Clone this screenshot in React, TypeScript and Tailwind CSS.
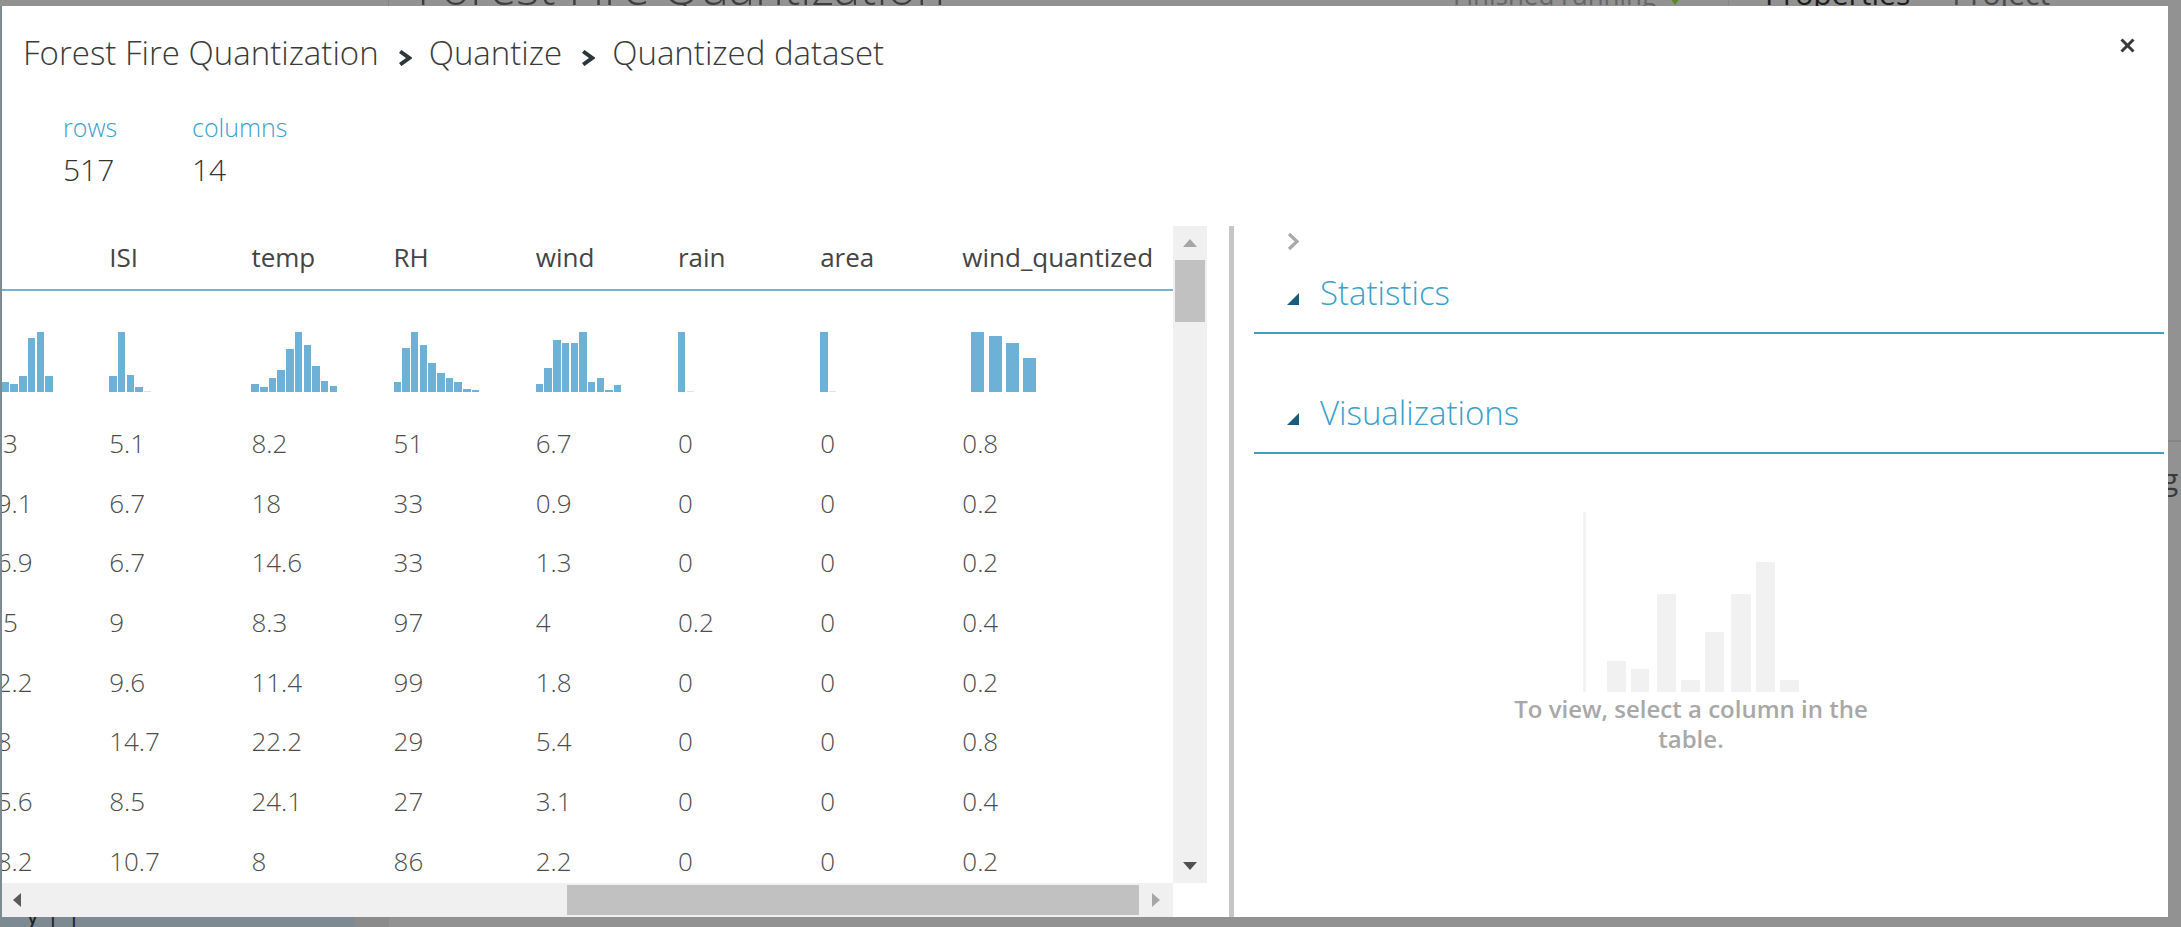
import React from 'react';

type Col = { name: string; vals: string[]; hist: number[]; wide?: boolean };

const cols: Col[] = [
  { name: 'DC', vals: ['94.3', '669.1', '686.9', '77.5', '102.2', '488', '495.6', '608.2'], hist: [0.12, 0.05, 0.05, 0.1, 0.17, 0.14, 0.27, 0.9, 1, 0.27] },
  { name: 'ISI', vals: ['5.1', '6.7', '6.7', '9', '9.6', '14.7', '8.5', '10.7'], hist: [0.27, 1, 0.29, 0.08, 0.01, 0, 0, 0, 0, 0] },
  { name: 'temp', vals: ['8.2', '18', '14.6', '8.3', '11.4', '22.2', '24.1', '8'], hist: [0.14, 0.08, 0.24, 0.36, 0.72, 1, 0.78, 0.43, 0.19, 0.1] },
  { name: 'RH', vals: ['51', '33', '33', '97', '99', '29', '27', '86'], hist: [0.16, 0.74, 1, 0.79, 0.48, 0.31, 0.24, 0.16, 0.05, 0.03] },
  { name: 'wind', vals: ['6.7', '0.9', '1.3', '4', '1.8', '5.4', '3.1', '2.2'], hist: [0.13, 0.4, 0.86, 0.82, 0.82, 1, 0.17, 0.23, 0.04, 0.12] },
  { name: 'rain', vals: ['0', '0', '0', '0.2', '0', '0', '0', '0'], hist: [1, 0.01, 0, 0, 0, 0, 0, 0, 0, 0] },
  { name: 'area', vals: ['0', '0', '0', '0', '0', '0', '0', '0'], hist: [1, 0.01, 0, 0, 0, 0, 0, 0, 0, 0] },
  { name: 'wind_quantized', vals: ['0.8', '0.2', '0.2', '0.4', '0.2', '0.8', '0.4', '0.2'], hist: [1, 0.93, 0.82, 0.57], wide: true },
];

function Hist({ hist, wide }: { hist: number[]; wide?: boolean }) {
  if (wide) {
    return (
      <div className="flex items-end gap-[4.3px] pl-[9px] h-[60px]">
        {hist.map((v, i) => (
          <div key={i} className="w-[13px] bg-[#6eb1d6]" style={{ height: `${v * 60}px` }} />
        ))}
      </div>
    );
  }
  return (
    <div className="flex items-end gap-[1.2px] h-[60px]">
      {hist.map((v, i) => (
        <div
          key={i}
          className={v > 0 && v < 0.02 ? 'w-[7.5px] bg-[#d2e7f3]' : 'w-[7.5px] bg-[#6eb1d6]'}
          style={{ height: `${v > 0 ? Math.max(v * 60, 1.5) : 0}px` }}
        />
      ))}
    </div>
  );
}

function Chevron() {
  return (
    <svg width="14" height="16" viewBox="0 0 14 16" className="mt-[10px] ml-[19px] mr-[17px] shrink-0">
      <polyline points="2.2,1.5 11.2,8 2.2,14.5" fill="none" stroke="#2c373d" strokeWidth="4" />
    </svg>
  );
}

function Table() {
  return (
    <div className="w-[1205px] flex flex-col shrink-0">
      <div className="flex h-[657px]">
        <div className="w-[1171px] overflow-hidden">
          <div className="ml-[-35px] w-[1206px]">
            <div className="h-[65px] pb-[2px] flex items-center border-b-2 border-[#72b4d8]">
              {cols.map((c) => (
                <div key={c.name} className="w-[142.2px] shrink-0 text-[26px] leading-none text-[#444]">
                  {c.name}
                </div>
              ))}
            </div>
            <div className="h-[122px] pb-[21px] flex items-end">
              {cols.map((c) => (
                <div key={c.name} className="w-[142.2px] shrink-0">
                  <Hist hist={c.hist} wide={c.wide} />
                </div>
              ))}
            </div>
            {cols[0].vals.map((_, r) => (
              <div key={r} className="h-[59.7px] flex items-center">
                {cols.map((c) => (
                  <div key={c.name} className="w-[142.2px] shrink-0 text-[26px] font-light leading-none text-[#4c4c4c]">
                    {c.vals[r]}
                  </div>
                ))}
              </div>
            ))}
          </div>
        </div>
        <div className="w-[34px] bg-[#f0f0f0] flex flex-col items-center">
          <div className="h-[34px] flex items-center justify-center">
            <svg width="14" height="8" viewBox="0 0 14 8">
              <polygon points="7,0 14,8 0,8" fill="#a6a6a6" />
            </svg>
          </div>
          <div className="w-[30px] h-[62px] bg-[#c1c1c1]" />
          <div className="flex-1" />
          <div className="h-[34px] flex items-center justify-center">
            <svg width="14" height="8" viewBox="0 0 14 8">
              <polygon points="0,0 14,0 7,8" fill="#505050" />
            </svg>
          </div>
        </div>
      </div>
      <div className="flex h-[34px]">
        <div className="w-[1171px] h-[34px] bg-[#f0f0f0] flex items-center">
          <div className="w-[34px] pl-[11px] flex items-center">
            <svg width="8" height="14" viewBox="0 0 8 14">
              <polygon points="8,0 8,14 0,7" fill="#5a5a5a" />
            </svg>
          </div>
          <div className="flex-1" />
          <div className="w-[572px] h-[30px] bg-[#c1c1c1]" />
          <div className="w-[34px] flex items-center justify-center">
            <svg width="8" height="14" viewBox="0 0 8 14">
              <polygon points="0,0 8,7 0,14" fill="#a6a6a6" />
            </svg>
          </div>
        </div>
        <div className="w-[34px] bg-white" />
      </div>
    </div>
  );
}

function Tri() {
  return (
    <svg width="12" height="12" viewBox="0 0 12 12" className="mt-[13px] shrink-0">
      <polygon points="12,0 12,12 0,12" fill="#1c5b7d" />
    </svg>
  );
}

function RightPane() {
  const bars = [
    [24, 19, 31],
    [48, 18, 23],
    [74, 19, 98],
    [98, 19, 12],
    [122, 19, 60],
    [148, 20, 98],
    [173, 19, 130],
    [197, 19, 12],
  ];
  return (
    <div className="flex-1 flex flex-col pl-[20px] pr-[4px]">
      <div className="mt-[5px] h-[21px] pl-[31px]">
        <svg width="16" height="21" viewBox="0 0 16 21">
          <polyline points="4,3 12,10.5 4,18" fill="none" stroke="#a9a9a9" strokeWidth="3.2" />
        </svg>
      </div>
      <div className="h-[82px] flex items-center border-b-2 border-[#3d9ec6] pl-[33px]">
        <Tri />
        <span className="ml-[21px] text-[33px] font-light leading-none text-[#3aa0cc]">Statistics</span>
      </div>
      <div className="mt-[38px] h-[82px] flex items-center border-b-2 border-[#3d9ec6] pl-[33px]">
        <Tri />
        <span className="ml-[21px] text-[33px] font-light leading-none text-[#3aa0cc]">Visualizations</span>
      </div>
      <div className="mt-[58px] ml-[237px] w-[400px] flex flex-col items-center">
        <svg width="216" height="180" viewBox="0 0 216 180">
          <rect x="0" y="0" width="3" height="180" fill="#f3f3f3" />
          {bars.map(([x, w, h], i) => (
            <rect key={i} x={x} y={180 - h} width={w} height={h} fill="#f1f1f1" />
          ))}
        </svg>
        <div className="mt-[2px] w-[400px] text-center text-[24px] leading-[30px] font-semibold text-[#a8a8a8]">
          To view, select a column in the table.
        </div>
      </div>
    </div>
  );
}

function Modal() {
  return (
    <div className="absolute left-[2px] top-[6px] w-[2166px] h-[911px] bg-white flex flex-col">
      <div className="h-[220px] flex flex-col shrink-0">
        <div className="h-[93px] flex items-center justify-between pl-[21px] pr-[33px]">
          <div className="flex items-center text-[33px] font-light leading-[40px] text-[#3a3a3a]">
            <span>Forest Fire Quantization</span>
            <Chevron />
            <span>Quantize</span>
            <Chevron />
            <span>Quantized dataset</span>
          </div>
          <svg width="15" height="15" viewBox="0 0 15 15" className="self-start mt-[32px]">
            <line x1="1.5" y1="1.5" x2="13.5" y2="13.5" stroke="#3a3a3a" strokeWidth="3" />
            <line x1="13.5" y1="1.5" x2="1.5" y2="13.5" stroke="#3a3a3a" strokeWidth="3" />
          </svg>
        </div>
        <div className="flex pl-[61px] mt-[13px]">
          <div className="w-[129px] flex flex-col">
            <span className="text-[25px] leading-[30px] font-light text-[#3aa0d0]">rows</span>
            <span className="mt-[10px] text-[30px] leading-[36px] font-light text-[#333]">517</span>
          </div>
          <div className="flex flex-col">
            <span className="text-[25px] leading-[30px] font-light text-[#3aa0d0]">columns</span>
            <span className="mt-[10px] text-[30px] leading-[36px] font-light text-[#333]">14</span>
          </div>
        </div>
      </div>
      <div className="flex-1 flex">
        <Table />
        <div className="w-[22px] shrink-0" />
        <div className="w-[5px] bg-[#c6c6c6] shrink-0" />
        <RightPane />
      </div>
    </div>
  );
}

export default function App() {
  return (
    <div className="relative w-[2181px] h-[927px] overflow-hidden bg-[#929292] flex flex-col font-['Open_Sans','Noto_Sans',sans-serif]">
      <div className="h-[6px] flex items-end overflow-hidden shrink-0">
        <div className="w-[389px] h-[6px] border-r border-[#868686] shrink-0" />
        <div className="w-[1064px] pl-[28px] shrink-0 flex items-end">
          <span className="text-[49px] font-light leading-none text-[#3e3e3e] mb-[-4.5px] whitespace-nowrap">Forest Fire Quantization</span>
        </div>
        <div className="w-[276px] h-[6px] border-r border-[#868686] shrink-0 flex items-end">
          <span className="text-[26px] leading-none text-[#666] mb-[-2px] whitespace-nowrap">Finished running</span>
          <span className="ml-[12px] mb-[1px] w-0 h-0 border-l-[7px] border-r-[7px] border-t-[10px] border-l-transparent border-r-transparent border-t-[#5b8a1e]" />
        </div>
        <div className="pl-[36px] flex items-end">
          <span className="text-[30px] leading-none text-[#1e1e1e] mb-[-2.5px] whitespace-nowrap">Properties</span>
          <span className="ml-[42px] text-[30px] leading-none text-[#4a4a4a] mb-[-2.5px] whitespace-nowrap">Project</span>
        </div>
      </div>
      <div className="flex-1 flex">
        <div className="w-[355px] bg-[#7d8a91] shrink-0 flex flex-col justify-end">
          <div className="h-[10px] overflow-hidden pl-[26px] text-[26px] leading-none text-[#222]">
            <span className="relative top-[-16px]">y | |</span>
          </div>
        </div>
        <div className="w-[34px] bg-[#8b8b8b] shrink-0" />
        <div className="flex-1" />
        <div className="w-[13px] shrink-0 flex flex-col">
          <div className="h-[434px]" />
          <div className="h-[2px] bg-[#858585]" />
          <div className="mt-[22px] ml-[-6px] text-[30px] leading-none text-[#3a3a3a]">g</div>
        </div>
      </div>
      <Modal />
    </div>
  );
}
